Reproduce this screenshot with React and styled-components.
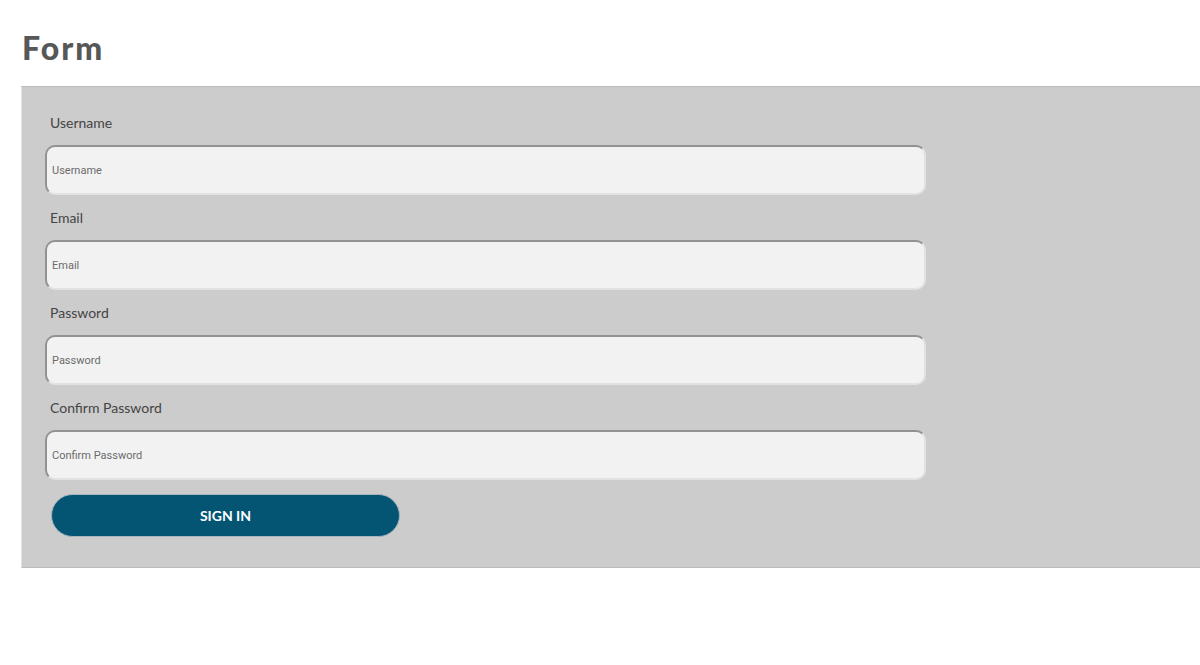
import React from 'react';
import styled, { createGlobalStyle } from 'styled-components';

const GlobalStyle = createGlobalStyle`
  html, body {
    margin: 0;
    padding: 0;
    background: #fff;
    overflow: hidden;
  }
  body {
    font-family: Lato, "Open Sans", sans-serif;
  }
`;

const Page = styled.div`
  padding: 29px 0 0 21px;
  width: 1200px;
  box-sizing: border-box;
`;

const Title = styled.h1`
  margin: 0 0 20px 1px;
  font-family: Lato, sans-serif;
  font-weight: 900;
  font-size: 32px;
  line-height: 37px;
  color: #575757;
  letter-spacing: 2px;
`;

const Panel = styled.form`
  background: #cccccc;
  border-top: 1px solid #bdbdbd;
  border-left: 1px solid #e2e2e2;
  border-bottom: 1px solid #bcbcbc;
  padding: 26px 0 30px 23px;
  margin: 0;
  width: 1200px;
  box-sizing: border-box;
`;

const Field = styled.div`
  display: flex;
  flex-direction: column;
  margin-bottom: 13px;
`;

const Label = styled.label`
  display: block;
  padding-left: 5px;
  margin-bottom: 12px;
  font-family: Lato, sans-serif;
  font-size: 14px;
  line-height: 20px;
  color: #444;
`;

const Input = styled.input`
  width: 881px;
  height: 50px;
  box-sizing: border-box;
  border-radius: 10px;
  border: 2px solid #e2e2e2;
  border-top-color: #929292;
  border-left-color: #929292;
  background: #f2f2f2;
  padding: 0 5px;
  font-family: Roboto, "Noto Sans", sans-serif;
  font-size: 11px;
  color: #333;
  outline: none;

  &::placeholder {
    color: #6b6b6b;
  }
`;

const SubmitButton = styled.button`
  margin: 1px 0 0 6px;
  width: 349px;
  height: 43px;
  border-radius: 22px;
  border: 1px solid #a9b6bb;
  background: #045473;
  color: #fff;
  font-family: Lato, sans-serif;
  font-weight: 700;
  font-size: 14px;
  cursor: pointer;
`;

const fields = [
  { id: 'username', label: 'Username', type: 'text' },
  { id: 'email', label: 'Email', type: 'email' },
  { id: 'password', label: 'Password', type: 'password' },
  { id: 'confirm', label: 'Confirm Password', type: 'password' },
];

export default function App() {
  return (
    <>
      <GlobalStyle />
      <Page>
        <Title>Form</Title>
        <Panel onSubmit={e => e.preventDefault()}>
          {fields.map(f => (
            <Field key={f.id}>
              <Label htmlFor={f.id}>{f.label}</Label>
              <Input id={f.id} type={f.type} placeholder={f.label} />
            </Field>
          ))}
          <SubmitButton type="submit">SIGN IN</SubmitButton>
        </Panel>
      </Page>
    </>
  );
}
